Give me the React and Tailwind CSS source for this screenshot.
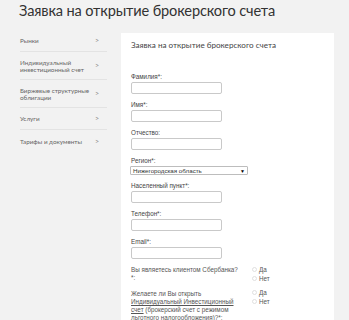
import React from 'react';

const menu = [
    { label: ['Рынки'] },
    { label: ['Индивидуальный', 'инвестиционный счет'] },
    { label: ['Биржевые структурные', 'облигации'] },
    { label: ['Услуги'] },
    { label: ['Тарифы и документы'] },
];

const fields = ['Фамилия*:', 'Имя*:', 'Отчество:', 'Регион*:', 'Населенный пункт*:', 'Телефон*:', 'Email*:'];

const Radio = ({ label }) => (
    <div className="flex items-center gap-[2px] h-[9px]">
        <span className="w-[5px] h-[5px] rounded-full border border-[#e0e0e0] bg-white" />
        <span>{label}</span>
    </div>
);

const App = () => {
    return (
        <div className="w-[349px] h-[320px] overflow-hidden bg-[#f2f2f2] font-['Lato',sans-serif]">
            {/* Page title */}
            <h1 className="pl-[19px] text-[14.6px] leading-[22px] tracking-[-0.15px] text-[#333]">
                Заявка на открытие брокерского счета
            </h1>

            <div className="flex mt-[8px] pl-[20px]">
                {/* Sidebar */}
                <nav className="w-[87px] shrink-0 text-[6.3px] leading-[7px] text-[#666]">
                    {menu.map((item, i) => (
                        <div
                            key={i}
                            className={`flex items-center justify-between pr-[8px] ${item.label.length > 1 ? 'h-[28px]' : 'h-[22px]'} ${i < menu.length - 1 ? 'border-b border-[#e3e3e3]' : ''}`}
                        >
                            <div className="whitespace-nowrap">
                                {item.label.map(line => <div key={line}>{line}</div>)}
                            </div>
                            <span className="text-[7px] text-[#888]">&gt;</span>
                        </div>
                    ))}
                </nav>

                {/* Form card */}
                <div className="ml-[14px] mt-[3px] w-[213px] h-[300px] bg-white pl-[10px] pt-[6px]">
                    <h2 className="text-[8.1px] leading-[12px] text-[#444]">Заявка на открытие брокерского счета</h2>

                    <div className="mt-[22px] font-['Liberation_Sans',sans-serif] text-[6.3px] leading-[8px] text-[#444] flex flex-col gap-[7px]">
                        {fields.map(f => (
                            <div key={f}>
                                <div className="h-[8px]">{f}</div>
                                {f === 'Регион*:' ? (
                                    <div className="mt-[1px] -ml-[1px] w-[118px] h-[9px] border border-[#bdbdbd] rounded-[1px] flex items-center justify-between px-[2px] text-[6.2px] text-[#333]">
                                        <span>Нижегородская область</span>
                                        <span className="text-[5px] text-black">▼</span>
                                    </div>
                                ) : (
                                    <div className="mt-[1px] w-[91px] h-[12px] border border-[#c9c9c9] rounded-[2px]" />
                                )}
                            </div>
                        ))}

                        <div className="flex">
                            <div className="w-[121px] text-[#555]">
                                <div>Вы являетесь клиентом Сбербанка?</div>
                                <div>*:</div>
                            </div>
                            <div className="-mt-[1px] text-[#555]">
                                <Radio label="Да" />
                                <Radio label="Нет" />
                            </div>
                        </div>

                        <div className="flex">
                            <div className="w-[121px] text-[#555]">
                                <div className="w-[108px]">
                                    <div>Желаете ли Вы открыть</div>
                                    <div className="underline">Индивидуальный Инвестиционный</div>
                                    <div><span className="underline">счет</span> (брокерский счет с режимом</div>
                                    <div>льготного налогообложения)?*:</div>
                                </div>
                            </div>
                            <div className="-mt-[2px] text-[#555]">
                                <Radio label="Да" />
                                <Radio label="Нет" />
                            </div>
                        </div>
                    </div>
                </div>
            </div>
        </div>
    );
};

export default App;
